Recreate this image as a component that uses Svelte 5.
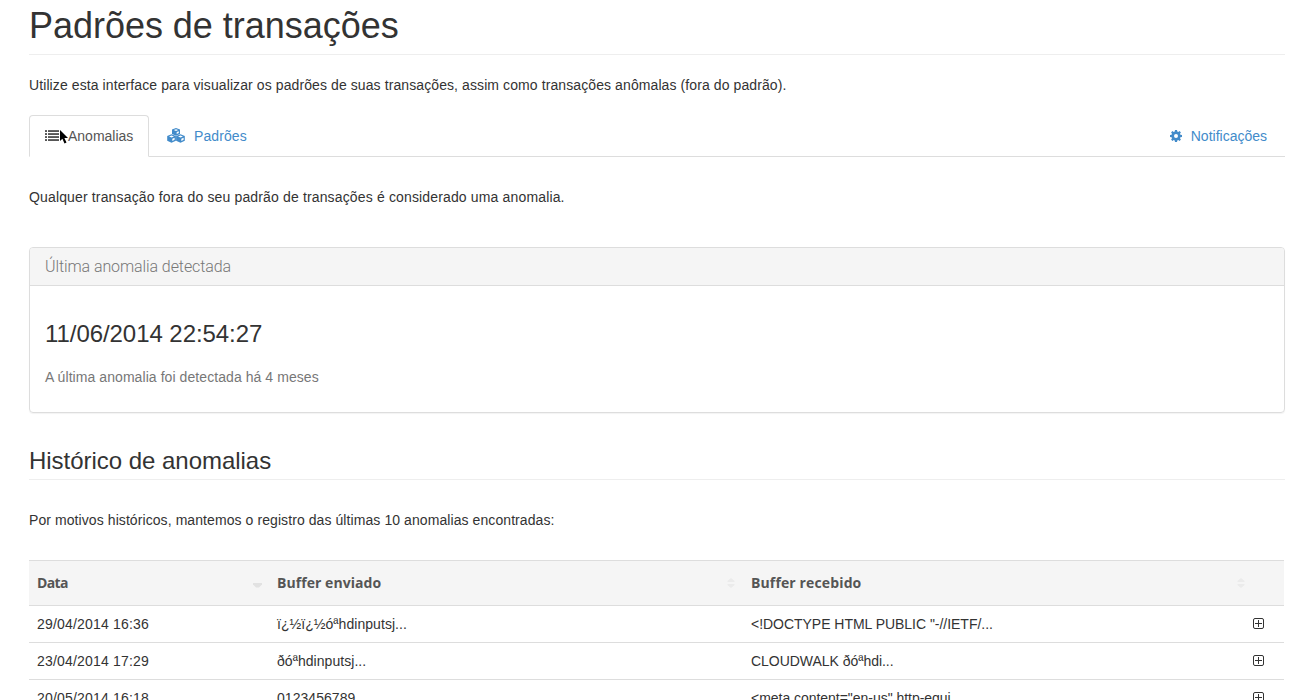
<script>
  const rows = [
    { date: '29/04/2014 16:36', sent: 'ï¿½ï¿½óªhdinputsj...', received: '<!DOCTYPE HTML PUBLIC "-//IETF/...' },
    { date: '23/04/2014 17:29', sent: 'ðóªhdinputsj...', received: 'CLOUDWALK ðóªhdi...' },
    { date: '20/05/2014 16:18', sent: '0123456789', received: '<meta content="en-us" http-equi...' }
  ];
</script>

<main>
  <h1>Padrões de transações</h1>
  <p class="intro">Utilize esta interface para visualizar os padrões de suas transações, assim como transações anômalas (fora do padrão).</p>

  <nav>
    <a class="tab active" href="#anomalias">
      <svg width="14" height="12" viewBox="0 0 14 12" shape-rendering="crispEdges" fill="#555">
        <path d="M0 1h2v1H0zM0 4h2v1H0zM0 7h2v1H0zM0 10h2v1H0zM3 1h11v1H3zM3 4h11v1H3zM3 7h11v1H3zM3 10h11v1H3z" />
        <path d="M0 0h2v1H0zM3 0h11v1H3zM0 3h2v1H0zM3 3h11v1H3zM0 6h2v1H0zM3 6h11v1H3zM0 9h2v1H0zM3 9h11v1H3z" opacity=".9" />
      </svg>
      <span class="label first">Anomalias</span>
      <svg class="cursor" width="10" height="16" viewBox="0 0 10 16"><path d="M1 1v11l2.4-2.3L5.5 14.5l2-1L5.4 9H9z" fill="#000" /></svg>
    </a>
    <a class="tab cubes" href="#padroes">
      <svg width="18" height="15" viewBox="0 0 18 15">
        <g fill="#428bca">
          <path d="M9 0l4 1.600v4.300L9 7.700 5 5.900V1.600z" />
          <path d="M4.500 6.200l4.400 1.800v4.700l-4.400 2.100L.2 12.700V8z" />
          <path d="M13.500 6.200L17.800 8v4.700l-4.300 2.100-4.400-2.100V8z" />
        </g>
        <g fill="#fff">
          <path d="M9 1.200l2.200.8L9 2.900 6.800 2z" />
          <path d="M9.700 4.100l2.100-.9v1.900l-2.100 1z" />
          <path d="M4.500 7.500l2.500.9-2.500 1-2.500-1z" />
          <path d="M5.300 10.700l2.300-1v2.100l-2.300 1.200z" />
          <path d="M13.500 7.500l2.500.9-2.500 1-2.500-1z" />
          <path d="M14.300 10.700l2.300-1v2.100l-2.300 1.200z" />
        </g>
      </svg>
      <span class="label">Padrões</span>
    </a>
    <a class="tab right" href="#notificacoes">
      <svg width="12" height="12" viewBox="0 0 12 12">
        <path fill="#428bca" fill-rule="evenodd" d="M5 0h2l.3 1.600 1 .4 1.300-.9 1.300 1.300-.9 1.300.4 1L12 5v2l-1.600.3-.4 1 .9 1.300-1.300 1.300-1.300-.9-1 .4L7 12H5l-.3-1.600-1-.4-1.300.9-1.300-1.300.9-1.300-.4-1L0 7V5l1.600-.3.4-1-.9-1.300 1.300-1.300 1.300.9 1-.4zM6 4a2 2 0 1 0 0 4 2 2 0 0 0 0-4z" />
      </svg>
      <span class="label">Notificações</span>
    </a>
  </nav>

  <p class="explain">Qualquer transação fora do seu padrão de transações é considerado uma anomalia.</p>

  <section class="panel">
    <header>Última anomalia detectada</header>
    <div class="body">
      <h3>11/06/2014 22:54:27</h3>
      <p>A última anomalia foi detectada há 4 meses</p>
    </div>
  </section>

  <h2>Histórico de anomalias</h2>
  <p class="history">Por motivos históricos, mantemos o registro das últimas 10 anomalias encontradas:</p>

  <div class="table">
    <div class="row head">
      <div class="cell first-col"><span>Data</span>
        <svg width="9" height="12" viewBox="0 0 9 12"><path d="M0 6h9v1.500L6 10.500H3L0 7.500z" fill="#e2e2e2" /></svg>
      </div>
      <div class="cell">Buffer enviado
        <svg width="8" height="12" viewBox="0 0 8 12"><path d="M.5 5V4L4 1l3.500 3v1zM.5 7h7v1L4 11 .5 8z" fill="#ebebeb" /></svg>
      </div>
      <div class="cell received-head">Buffer recebido
        <svg width="8" height="12" viewBox="0 0 8 12"><path d="M.5 5V4L4 1l3.500 3v1zM.5 7h7v1L4 11 .5 8z" fill="#ebebeb" /></svg>
      </div>
      <div class="cell"></div>
    </div>
    {#each rows as row}
      <div class="row">
        <div class="cell date">{row.date}</div>
        <div class="cell sent">{row.sent}</div>
        <div class="cell received">{row.received}</div>
        <div class="cell action">
          <svg width="11" height="11" viewBox="0 0 11 11" fill="none" stroke="#333">
            <rect x=".5" y=".5" width="10" height="10" rx="1.500" />
            <path d="M5.500 2v7M2 5.500h7" />
          </svg>
        </div>
      </div>
    {/each}
  </div>
</main>

<style>
  :global(body) { background: #fff; overflow: hidden; }
  :global(#app) { height: 700px; overflow: hidden; }
  main { box-sizing: border-box; width: 1300px; padding: 0 15px 0 29px; font: 14px/20px "Liberation Sans", Arial, sans-serif; color: #333; }
  p, h1, h2, h3 { margin: 0; font-weight: 400; white-space: nowrap; }
  h1 { height: 54px; box-sizing: content-box; line-height: 52px; font-size: 36px; border-bottom: 1px solid #eee; letter-spacing: -.03px; }
  .intro { padding: 20px 0; letter-spacing: .095px; }
  nav { display: flex; height: 41px; border-bottom: 1px solid #ddd; }
  .tab { display: flex; align-items: center; box-sizing: border-box; height: 41px; color: #428bca; text-decoration: none; }
  .tab svg { flex: none; }
  .active { position: relative; width: 120px; height: 42px; padding-left: 15px; border: 1px solid #ddd; border-bottom-color: #fff; border-radius: 4px 4px 0 0; background: #fff; color: #555; }
  .label { margin-left: 10px; }
  .label.first { margin-left: 9px; }
  .cursor { position: absolute; left: 29px; top: 13px; }
  .cubes { padding-left: 18px; }
  .cubes .label { margin-left: 9px; letter-spacing: .1px; }
  .right { margin-left: auto; padding-right: 18px; }
  .right .label { margin-left: 9px; }
  .explain { padding: 30px 0 40px; height: 20px; letter-spacing: .15px; }
  .panel { box-sizing: border-box; height: 166px; border: 1px solid #ddd; border-radius: 4px; box-shadow: 0 1px 1px rgba(0,0,0,.05); overflow: hidden; }
  .panel header { height: 37px; padding-left: 15px; line-height: 38px; font-family: Roboto, sans-serif; font-size: 16px; font-weight: 300; color: #777; background: #f5f5f5; border-bottom: 1px solid #ddd; letter-spacing: -.09px; }
  .body { padding: 35px 15px; }
  h3 { font-size: 24px; line-height: 26px; letter-spacing: -.06px; }
  .body p { margin-top: 20px; color: #777; letter-spacing: .07px; }
  h2 { height: 31px; margin-top: 35px; line-height: 26px; font-size: 24px; border-bottom: 1px solid #eee; letter-spacing: -.03px; }
  .history { padding: 30px 0; letter-spacing: .08px; }
  .table { width: 1255px; border-top: 1px solid #ddd; }
  .row { display: grid; grid-template-columns: 240px 474px 510px 31px; height: 36px; border-bottom: 1px solid #ddd; align-items: center; }
  .cell { display: flex; align-items: center; padding-left: 8px; white-space: nowrap; }
  .head { height: 44px; background: #f5f5f5; font-family: "Open Sans", sans-serif; font-weight: 700; color: #555; }
  .head .cell { justify-content: space-between; padding-right: 8px; letter-spacing: .05px; }
  .head .first-col { padding-right: 7px; }
  .first-col span { letter-spacing: -.6px; }
  .head .received-head { letter-spacing: .13px; }
  .date { letter-spacing: .19px; }
  .sent { letter-spacing: .05px; }
  .received { letter-spacing: -.03px; }
  .action { padding: 0 0 2px; }
</style>
